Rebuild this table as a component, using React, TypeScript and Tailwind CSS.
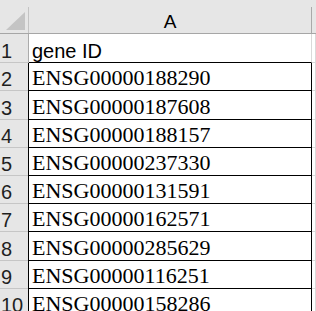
const rows: { n: number; text: string; h: string }[] = [
  { n: 1, text: "gene ID", h: "h-[29px]" },
  { n: 2, text: "ENSG00000188290", h: "h-[28px]" },
  { n: 3, text: "ENSG00000187608", h: "h-[29px]" },
  { n: 4, text: "ENSG00000188157", h: "h-[28px]" },
  { n: 5, text: "ENSG00000237330", h: "h-[28px]" },
  { n: 6, text: "ENSG00000131591", h: "h-[28px]" },
  { n: 7, text: "ENSG00000162571", h: "h-[28px]" },
  { n: 8, text: "ENSG00000285629", h: "h-[29px]" },
  { n: 9, text: "ENSG00000116251", h: "h-[28px]" },
  { n: 10, text: "ENSG00000158286", h: "h-[28px]" },
];

const sans = "font-['Liberation_Sans',Arial,sans-serif]";
const serif = "font-['Liberation_Serif','Times_New_Roman',serif]";

const Row = ({ n, text, h }: { n: number; text: string; h: string }) => {
  const first = n === 1;
  return (
    <div className={`flex ${h}`}>
      <div
        className={`w-[29px] shrink-0 flex items-end pl-[1px] pb-[1px] bg-[#e6e6e6] border-r border-b border-r-[#ababab] border-b-[#c6c6c6] text-[20px] leading-[20px] text-[#1f1f1f] ${sans}`}
      >
        {n}
      </div>
      <div
        className={`w-[283px] shrink-0 flex items-end pl-[3px] pb-[1px] border-b border-b-black border-r ${
          first
            ? `border-r-[#d9d9d9] text-[20px] leading-[20px] ${sans}`
            : `border-l border-l-black border-r-black -ml-px w-[284px] text-[22px] leading-[22px] ${serif}`
        } text-black`}
      >
        {text}
      </div>
      <div className="flex-1 border-b border-b-[#dadada] border-r border-r-[#dadada]" />
    </div>
  );
};

export default function App() {
  return (
    <div className="w-[316px] h-[311px] overflow-hidden bg-white">
      <div className="flex h-[34px] bg-[#e6e6e6] border-b border-b-[#a6a6a6]">
        <div className="w-[28px] shrink-0 relative">
          <svg width="28" height="33" className="block">
            <polygon points="25,12 25,30 6,30" fill="#c4c4c4" />
          </svg>
        </div>
        <div className="w-px h-[26px] self-end bg-[#c3c3c3]" />
        <div className={`w-[282px] shrink-0 flex items-end justify-center pb-[2px] text-[19px] leading-[19px] text-black ${sans}`}>
          A
        </div>
        <div className="w-px h-[26px] self-end bg-[#a9a9a9]" />
        <div className="flex-1" />
      </div>
      {rows.map((r) => (
        <Row key={r.n} {...r} />
      ))}
    </div>
  );
}
